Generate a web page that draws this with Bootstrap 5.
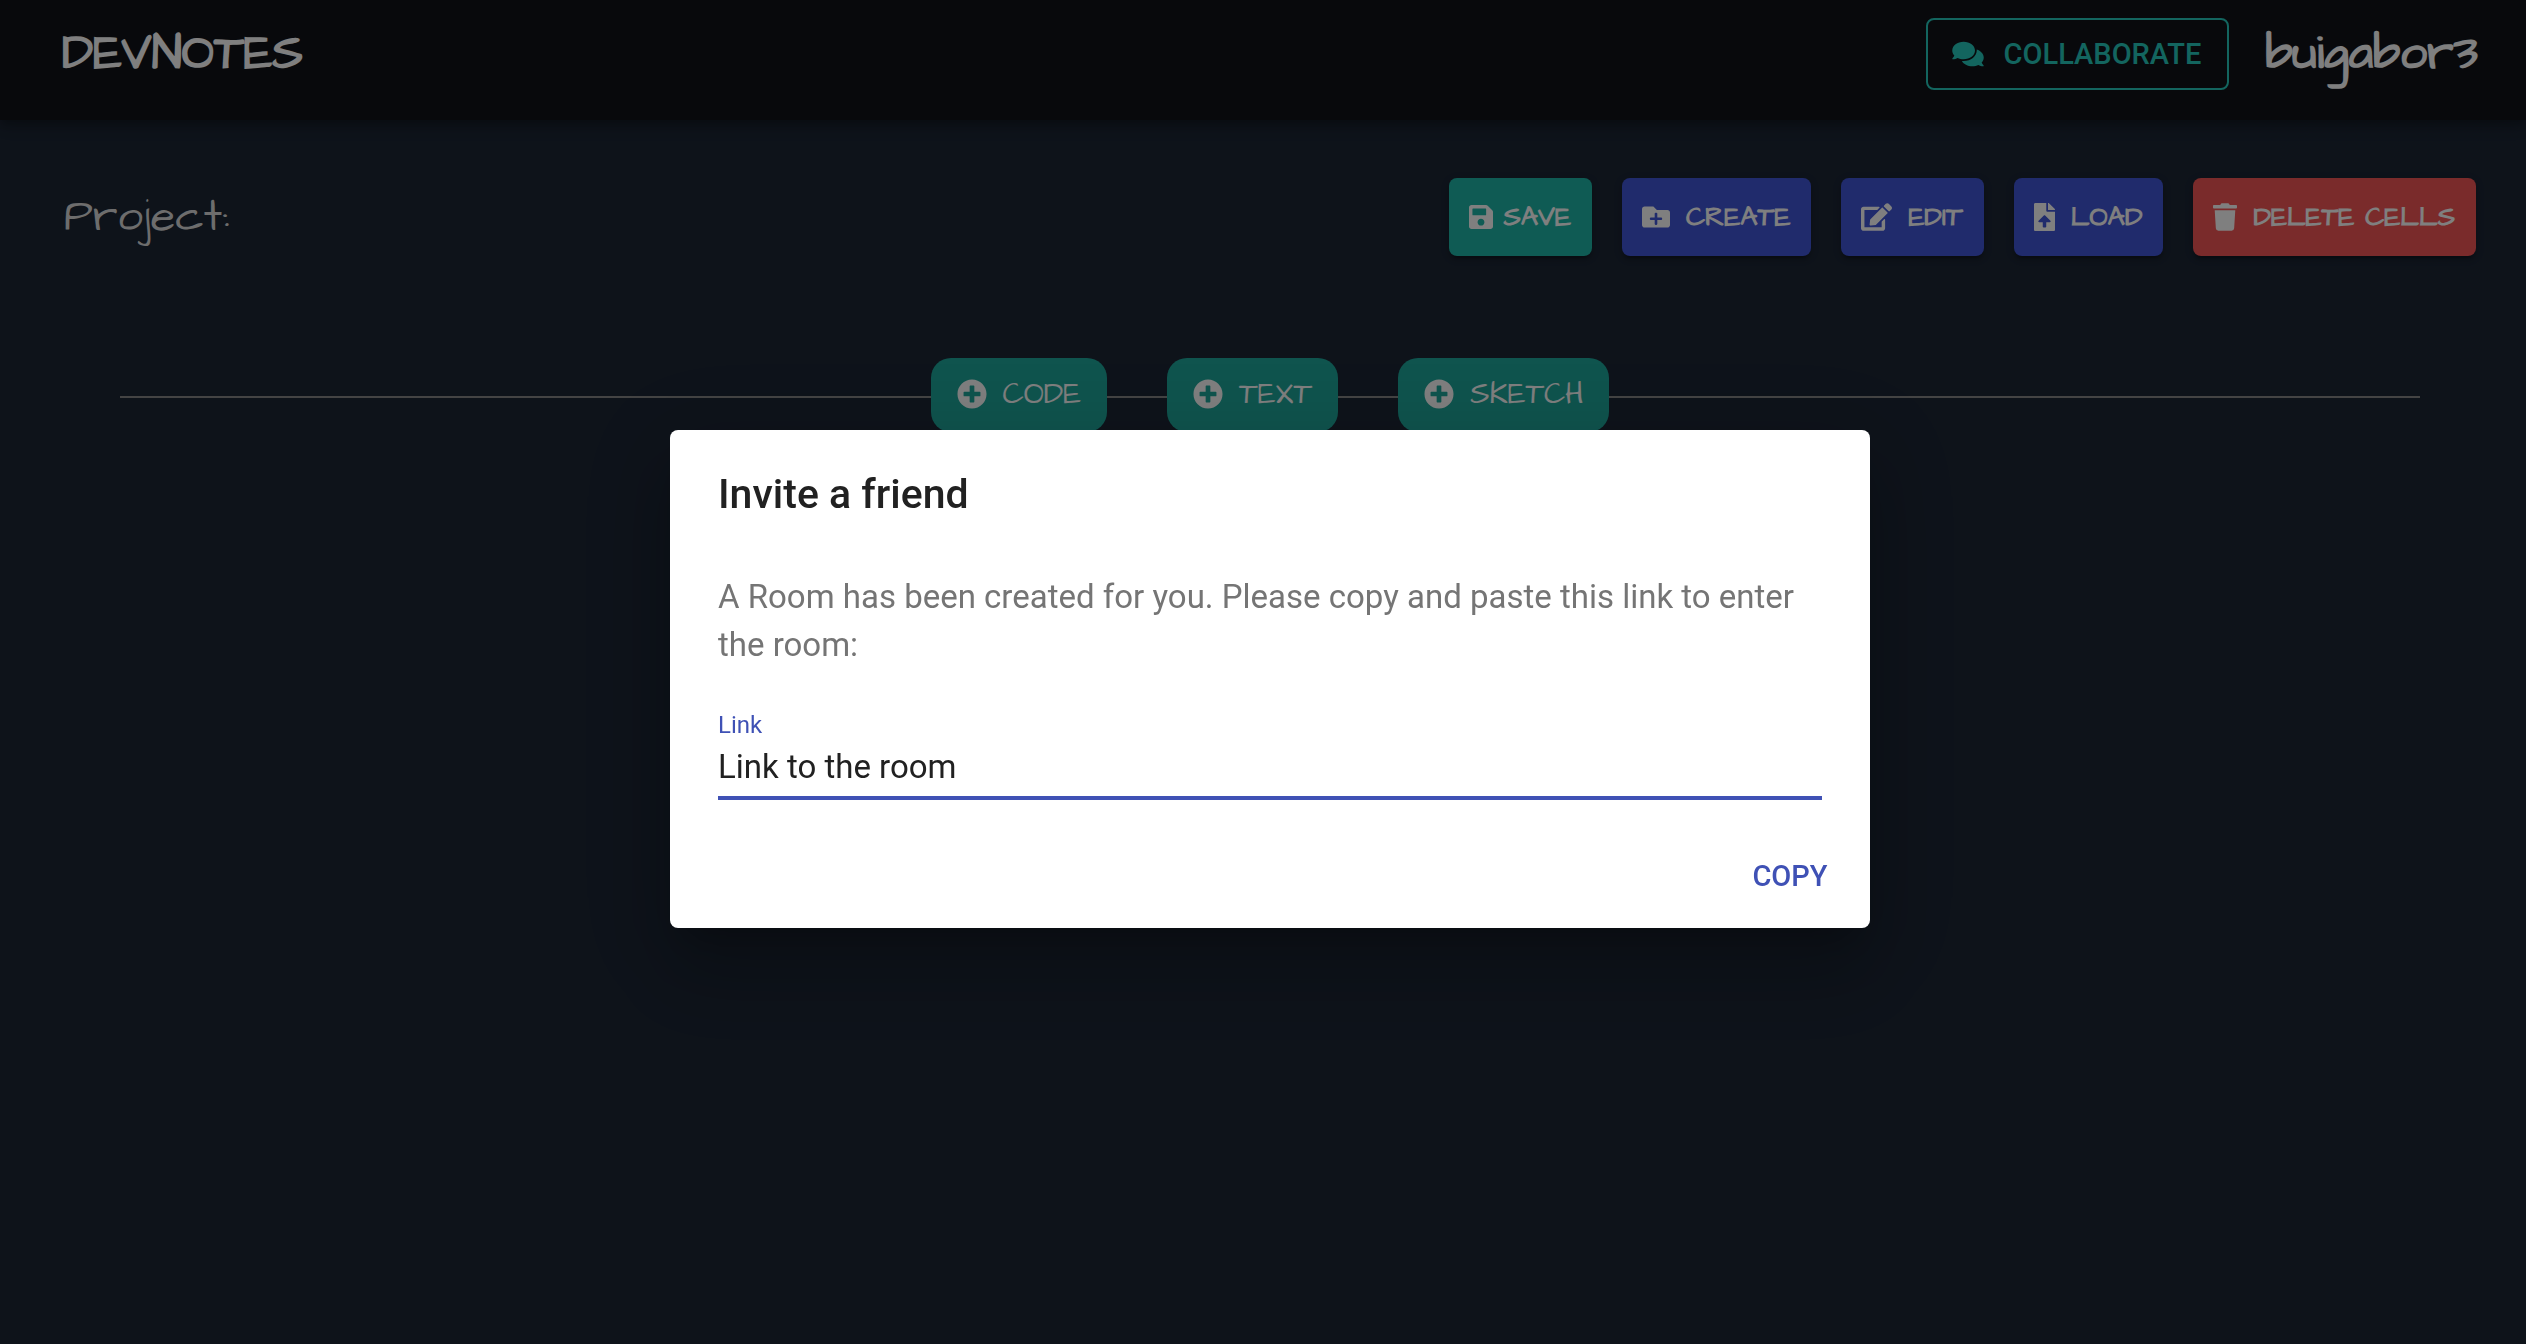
<!DOCTYPE html>
<html lang="en">
<head>
<meta charset="utf-8">
<meta name="viewport" content="width=device-width, initial-scale=1">
<title>DevNotes</title>
<link href="https://cdn.jsdelivr.net/npm/bootstrap@5.3.0/dist/css/bootstrap.min.css" rel="stylesheet">
<style>
  :root { --hand: "Architects Daughter", Lato, sans-serif; --ui: Roboto, sans-serif; }
  body { background: #1c2635; color: #fff; font-family: var(--ui); min-height: 100vh; }
  svg { fill: currentColor; flex: none; }
  .topbar { background: #101218; padding: 18px 48px 30px 62px;
    box-shadow: 0 4px 8px -2px rgba(0,0,0,.2), 0 8px 10px rgba(0,0,0,.14), 0 2px 20px rgba(0,0,0,.12); }
  .brand-name, .user-name { font: 700 48px/56px var(--hand); color: #fff; text-decoration: none; }
  .account { gap: 36px; }
  .btn-collab { --bs-btn-color: #26cabe; --bs-btn-border-color: #26cabe; --bs-btn-border-width: 2px; --bs-btn-border-radius: 8px;
    font: 500 29px/48px var(--ui); padding: 10px 26px 10px 24px; gap: 20px; }
  .project-row { padding: 58px 50px 0 64px; }
  .project-title { font: 400 45px/56px var(--hand); color: #dadada; }
  .toolbar { gap: 30px; }
  .tool { font: 700 27px/38px var(--hand); padding: 20px 21px 20px 20px; border: 0; border-radius: 8px; color: #fff; gap: 16px;
    box-shadow: 0 6px 2px -4px rgba(0,0,0,.2), 0 4px 4px rgba(0,0,0,.14), 0 2px 10px rgba(0,0,0,.12); }
  .tool:hover, .add-cell:hover { color: #fff; }
  .tool-save { background: #1eb6a8; gap: 10px; }
  .tool-blue { background: #4056d8; }
  .tool-red { background: #f45656; }
  .cell-row { margin: 102px 106px 0 120px; }
  .cell-row hr { border-top: 2px solid #888; opacity: 1; margin: 3px 0 0; }
  .cell-row .cell-link { width: 60px; }
  .add-cell { font: 400 30px/38px var(--hand); background: #1ea89c; color: #fff; border: 0; border-radius: 20px; padding: 17px 26px 19px; gap: 16px; }
  .modal { padding: 14px 0 0 14px; }
  .modal-backdrop { --bs-backdrop-opacity: .5; }
  .modal-dialog { --bs-modal-width: 1200px; }
  .modal-content { color: #212121; border: 0; border-radius: 8px;
    box-shadow: 0 22px 30px -14px rgba(0,0,0,.2), 0 48px 76px 6px rgba(0,0,0,.14), 0 18px 92px 16px rgba(0,0,0,.12); }
  .modal-header { border: 0; padding: 32px 48px; }
  .modal-title { font: 500 41px/64px var(--ui); }
  .modal-body { padding: 15px 48px 24px; }
  .room-note { font-size: 33px; line-height: 48px; color: #757575; margin: 0 0 40px; }
  .link-label { font-size: 24px; line-height: 32px; color: #3f51b5; margin-bottom: 1px; }
  .link-input { font: 400 33px/38px var(--ui); color: #212121; border: 0; border-bottom: 4px solid #3f51b5; border-radius: 0; padding: 6px 0 10px; background: none; }
  .link-input:focus { border-color: #3f51b5; box-shadow: none; background: none; color: #212121; }
  .modal-footer { border: 0; padding: 16px; }
  .modal-footer > * { margin: 0; }
  .btn-copy { font: 500 29px/48px var(--ui); color: #3f51b5; border: 0; padding: 12px 16px; min-width: 128px; }
</style>
</head>
<body>
<header class="topbar d-flex justify-content-between align-items-center">
  <a class="brand-name" href="#">DEVNOTES</a>
  <div class="account d-flex align-items-center">
    <button class="btn btn-collab d-flex align-items-center" type="button">
      <svg width="32" height="28" viewBox="0 0 576 512" aria-hidden="true"><path d="M416 192c0-88.4-93.1-160-208-160S0 103.6 0 192c0 34.3 14.1 65.9 38 92-13.4 30.2-35.5 54.2-35.8 54.5-2.2 2.3-2.8 5.7-1.5 8.7S4.8 352 8 352c36.6 0 66.9-12.3 88.7-25 32.2 15.7 70.3 25 111.3 25 114.9 0 208-71.6 208-160zm122 220c23.9-26 38-57.7 38-92 0-66.9-53.5-124.2-129.3-148.1.9 6.6 1.3 13.3 1.3 20.1 0 105.9-107.7 192-240 192-10.8 0-21.3-.8-31.7-1.9C207.8 439.6 281.8 480 368 480c41 0 79.1-9.2 111.3-25 21.8 12.7 52.1 25 88.7 25 3.2 0 6.1-1.9 7.3-4.8 1.3-2.9.7-6.3-1.5-8.7-.3-.3-22.4-24.2-35.8-54.5z"/></svg>
      COLLABORATE</button>
    <a class="user-name" href="#">buigabor3</a>
  </div>
</header>
<main>
  <div class="project-row d-flex justify-content-between align-items-center">
    <h1 class="project-title m-0">Project:</h1>
    <div class="toolbar d-flex">
      <button class="btn tool tool-save d-flex align-items-center" type="button">
        <svg width="24" height="28" viewBox="0 0 448 512" aria-hidden="true"><path d="M433.941 129.941l-83.882-83.882A48 48 0 0 0 316.118 32H48C21.49 32 0 53.49 0 80v352c0 26.51 21.49 48 48 48h352c26.51 0 48-21.49 48-48V163.882a48 48 0 0 0-14.059-33.941zM224 416c-35.346 0-64-28.654-64-64 0-35.346 28.654-64 64-64s64 28.654 64 64c0 35.346-28.654 64-64 64zm96-304.52V212c0 6.627-5.373 12-12 12H76c-6.627 0-12-5.373-12-12V108c0-6.627 5.373-12 12-12h228.52c3.183 0 6.235 1.264 8.485 3.515l3.48 3.48A11.996 11.996 0 0 1 320 111.48z"/></svg>
        SAVE</button>
      <button class="btn tool tool-blue d-flex align-items-center" type="button">
        <svg width="28" height="28" viewBox="0 0 512 512" aria-hidden="true"><path d="M464 128H272l-64-64H48C21.49 64 0 85.49 0 112v288c0 26.51 21.49 48 48 48h416c26.51 0 48-21.49 48-48V176c0-26.51-21.49-48-48-48zm-96 168c0 8.84-7.16 16-16 16h-72v72c0 8.84-7.16 16-16 16h-16c-8.84 0-16-7.16-16-16v-72h-72c-8.84 0-16-7.16-16-16v-16c0-8.84 7.16-16 16-16h72v-72c0-8.84 7.16-16 16-16h16c8.84 0 16 7.16 16 16v72h72c8.84 0 16 7.16 16 16v16z"/></svg>
        CREATE</button>
      <button class="btn tool tool-blue d-flex align-items-center" type="button">
        <svg width="31" height="28" viewBox="0 0 576 512" aria-hidden="true"><path d="M402.6 83.2l90.2 90.2c3.8 3.8 3.8 10 0 13.8L274.4 405.6l-92.8 10.3c-12.4 1.4-22.9-9.1-21.5-21.5l10.3-92.8L388.8 83.2c3.8-3.8 10-3.8 13.8 0zm162-22.9l-48.8-48.8c-15.2-15.2-39.9-15.2-55.2 0l-35.4 35.4c-3.8 3.8-3.8 10 0 13.8l90.2 90.2c3.8 3.8 10 3.8 13.8 0l35.4-35.4c15.2-15.3 15.2-40 0-55.2zM384 346.2V448H64V128h229.8c3.2 0 6.2-1.3 8.5-3.5l40-40c7.6-7.6 2.2-20.5-8.5-20.5H48C21.5 64 0 85.5 0 112v352c0 26.5 21.5 48 48 48h352c26.5 0 48-21.5 48-48V306.2c0-10.7-12.9-16-20.5-8.5l-40 40c-2.2 2.3-3.5 5.3-3.5 8.5z"/></svg>
        EDIT</button>
      <button class="btn tool tool-blue d-flex align-items-center" type="button">
        <svg width="21" height="28" viewBox="0 0 384 512" aria-hidden="true"><path d="M224 136V0H24C10.7 0 0 10.7 0 24v464c0 13.3 10.7 24 24 24h336c13.3 0 24-10.7 24-24V160H248c-13.2 0-24-10.8-24-24zm65.18 216.01H224v80c0 8.84-7.16 16-16 16h-32c-8.84 0-16-7.16-16-16v-80H94.82c-14.28 0-21.41-17.29-11.27-27.36l96.42-95.7c6.65-6.61 17.39-6.61 24.04 0l96.42 95.7c10.15 10.07 3.03 27.36-11.25 27.36zM377 105L279.1 7c-4.5-4.5-10.6-7-17-7H256v128h128v-6.1c0-6.3-2.5-12.4-7-16.9z"/></svg>
        LOAD</button>
      <button class="btn tool tool-red d-flex align-items-center" type="button">
        <svg width="24" height="28" viewBox="0 0 448 512" aria-hidden="true"><path d="M432 32H312l-9.4-18.7A24 24 0 0 0 281.1 0H166.8a23.72 23.72 0 0 0-21.4 13.3L136 32H16A16 16 0 0 0 0 48v32a16 16 0 0 0 16 16h416a16 16 0 0 0 16-16V48a16 16 0 0 0-16-16zM53.2 467a48 48 0 0 0 47.9 45h245.8a48 48 0 0 0 47.9-45L416 128H32z"/></svg>
        DELETE CELLS</button>
    </div>
  </div>
  <div class="cell-row d-flex align-items-center">
    <hr class="flex-grow-1">
    <div class="d-flex align-items-center">
      <button class="btn add-cell d-flex align-items-center" type="button">
        <svg width="30" height="30" viewBox="0 0 512 512" aria-hidden="true"><path id="plus" d="M256 8C119 8 8 119 8 256s111 248 248 248 248-111 248-248S393 8 256 8zm144 276c0 6.6-5.4 12-12 12h-92v92c0 6.6-5.4 12-12 12h-56c-6.6 0-12-5.4-12-12v-92h-92c-6.6 0-12-5.4-12-12v-56c0-6.6 5.4-12 12-12h92v-92c0-6.6 5.4-12 12-12h56c6.6 0 12 5.4 12 12v92h92c6.6 0 12 5.4 12 12v56z"/></svg>
        CODE</button>
      <hr class="cell-link">
      <button class="btn add-cell d-flex align-items-center" type="button">
        <svg width="30" height="30" viewBox="0 0 512 512" aria-hidden="true"><use href="#plus"/></svg>
        TEXT</button>
      <hr class="cell-link">
      <button class="btn add-cell d-flex align-items-center" type="button">
        <svg width="30" height="30" viewBox="0 0 512 512" aria-hidden="true"><use href="#plus"/></svg>
        SKETCH</button>
    </div>
    <hr class="flex-grow-1">
  </div>
</main>

<div class="modal-backdrop show"></div>
<div class="modal show d-block" tabindex="-1" role="dialog" aria-modal="true" aria-labelledby="invite-title">
  <div class="modal-dialog modal-dialog-centered">
    <div class="modal-content">
      <div class="modal-header"><h2 class="modal-title" id="invite-title">Invite a friend</h2></div>
      <div class="modal-body">
        <p class="room-note">A Room has been created for you. Please copy and paste this link to enter the room:</p>
        <label class="link-label d-block" for="room-link">Link</label>
        <input class="form-control link-input" id="room-link" type="text" value="Link to the room">
      </div>
      <div class="modal-footer"><button class="btn btn-copy" type="button">COPY</button></div>
    </div>
  </div>
</div>
<script src="https://cdn.jsdelivr.net/npm/bootstrap@5.3.0/dist/js/bootstrap.bundle.min.js"></script>
</body>
</html>
